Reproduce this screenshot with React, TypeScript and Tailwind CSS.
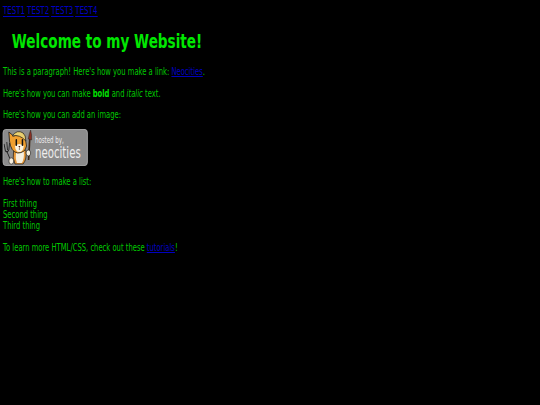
const Badge = () => (
  <div className="relative flex h-[37px] w-[125px] rounded-[4px] bg-[#8c8c8c] border border-[#b0b0b0]">
    <svg className="absolute left-0 top-0" width="46" height="37" viewBox="0 0 46 37">
      {/* brush */}
      <path d="M39 6 L37 30" stroke="#3a2412" strokeWidth="2.4" />
      <path d="M36.5 9 Q38 3 40 0 Q42 4 41.5 10 Z" fill="#8a2f22" stroke="#222" strokeWidth="0.5" />
      {/* fork */}
      <path d="M1 14 L3 21 M5 12 L6 20 M9 13 L8 20 M3 21 Q6 23 8 20 M5.5 22 L11 31" stroke="#222" strokeWidth="1.3" fill="none" />
      {/* body */}
      <path d="M15 21 L33 20 Q35 29 29 34 L17 34 Q13 28 15 21 Z" fill="#e89a3a" stroke="#222" strokeWidth="0.9" />
      <path d="M19 22 L30 22 Q31 29 27 33 L20 33 Q17 28 19 22 Z" fill="#f7f0df" />
      {/* head */}
      <path d="M9 11 L8 2 L15 6 Q22 3 29 6 Q34 10 34 16 Q32 23 21 23 Q11 22 9 11 Z" fill="#f0a030" stroke="#222" strokeWidth="1" />
      <path d="M13 6 Q20 -1 29 3 Q33 5 33 11 Q24 4 13 6 Z" fill="#ead070" stroke="#222" strokeWidth="0.9" />
      <path d="M17 16 Q23 12 30 16 Q29 22 23 22 Q18 22 17 16 Z" fill="#fbf3e0" />
      <path d="M19 10 L19 15 M28 10 L28 15" stroke="#111" strokeWidth="2.2" strokeLinecap="round" />
      <path d="M22 16 L25 16 L23.5 18 Z" fill="#5a2014" />
      <path d="M23.5 18 L23.5 20" stroke="#222" strokeWidth="0.6" />
      {/* paws */}
      <ellipse cx="36.7" cy="23" rx="3.4" ry="3" fill="#f7f0df" stroke="#222" strokeWidth="0.8" />
      <ellipse cx="11.6" cy="31" rx="3.6" ry="3.2" fill="#f7f0df" stroke="#222" strokeWidth="0.8" />
    </svg>
    <div className="ml-[46px] flex flex-col text-[#eeeeee]">
      <span className="mt-[6px] text-[8px] leading-[9px]">hosted by,</span>
      <span className="text-[15px] leading-[17px]">neocities</span>
    </div>
  </div>
);

export default function App() {
  return (
    <div className="h-[405px] overflow-hidden bg-black">
      <div className="w-[785px] origin-top-left scale-x-[0.68] px-[4.4px] pt-[5px] font-['DejaVu_Sans',sans-serif] text-[10px] leading-[11.4px] text-[#00c800]">
        <nav className="flex gap-[3px] text-[10.4px] text-[#0000c0] underline underline-offset-[1.5px]">
          <a href="#">TEST1</a>
          <a href="#">TEST2</a>
          <a href="#">TEST3</a>
          <a href="#">TEST4</a>
        </nav>
        <h1 className="mt-[14px] pl-[13px] text-[20px] leading-[23px] font-bold text-[#00e800]">
          Welcome to my Website!
        </h1>
        <p className="mt-[13px]">
          This is a paragraph! Here's how you make a link:{" "}
          <a href="#" className="text-[#0000c0] underline">Neocities</a>.
        </p>
        <p className="mt-[10.5px]">
          Here's how you can make <strong className="text-[#00e000]">bold</strong> and <em>italic</em> text.
        </p>
        <p className="mt-[9.5px]">Here's how you can add an image:</p>
        <div className="mt-[8px]">
          <Badge />
        </div>
        <p className="mt-[10px]">Here's how to make a list:</p>
        <ul className="mt-[10.5px]">
          <li>First thing</li>
          <li>Second thing</li>
          <li>Third thing</li>
        </ul>
        <p className="mt-[10px]">
          To learn more HTML/CSS, check out these{" "}
          <a href="#" className="text-[#0000c0] underline">tutorials</a>!
        </p>
      </div>
    </div>
  );
}
